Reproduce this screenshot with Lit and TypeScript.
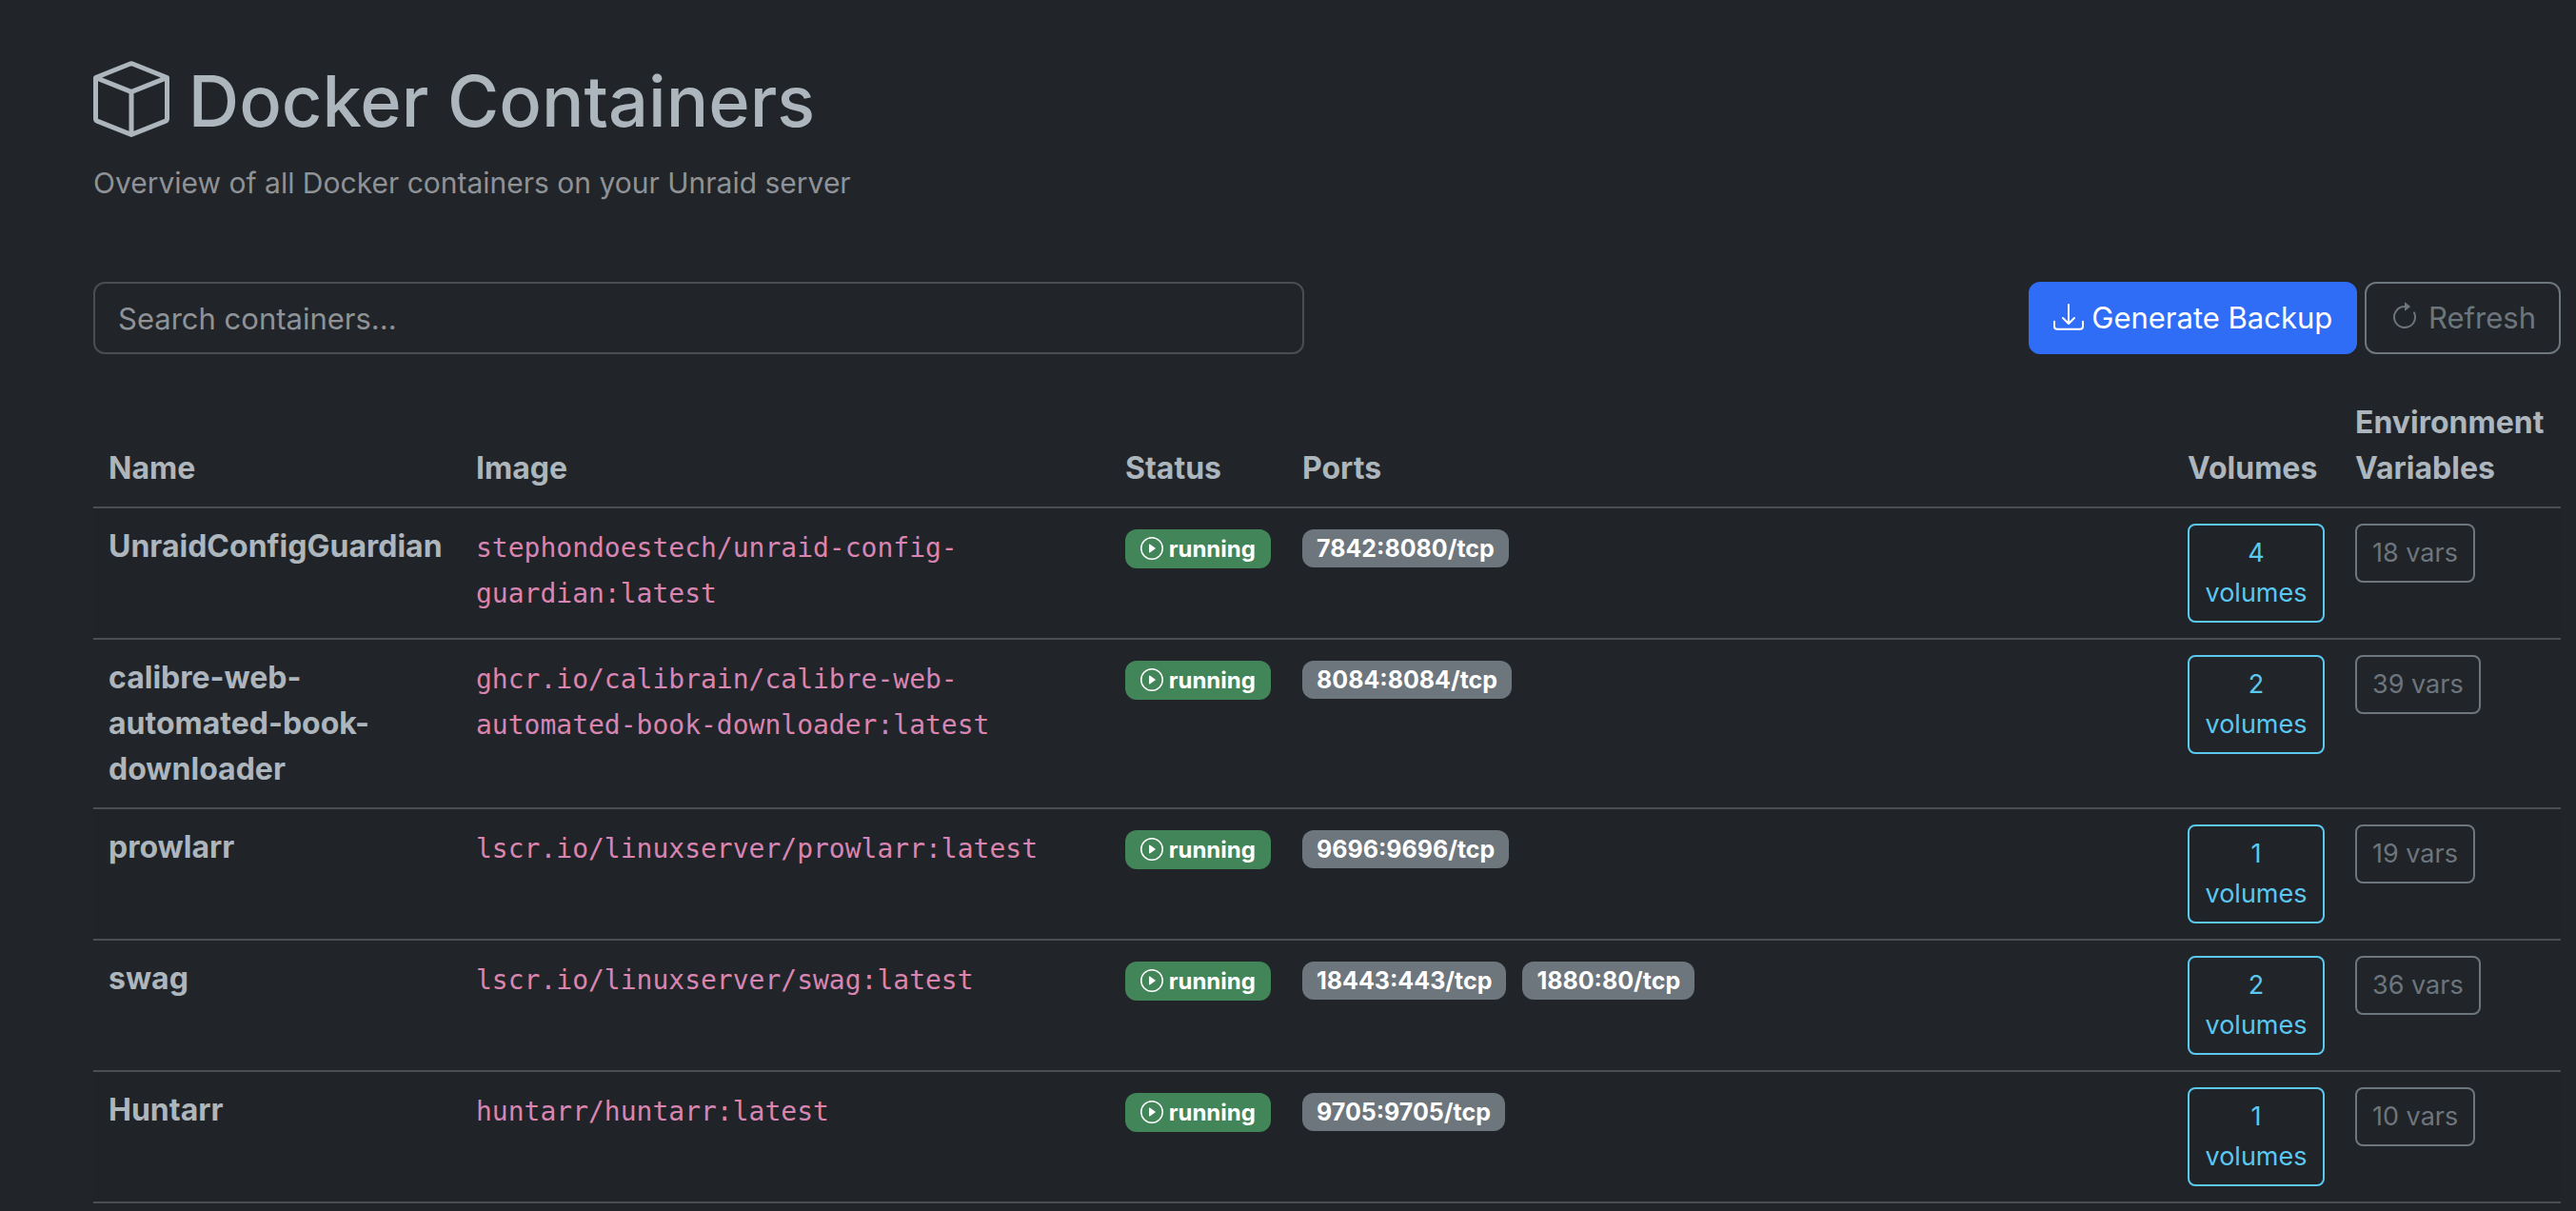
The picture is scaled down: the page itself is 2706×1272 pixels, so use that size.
import { LitElement, html, css, svg } from "lit";
import { customElement, state } from "lit/decorators.js";

interface Container {
  name: string;
  image: string;
  status: string;
  ports: string[];
  volumes: number;
  vars: number;
}

const CONTAINERS: Container[] = [
  { name: "UnraidConfigGuardian", image: "stephondoestech/unraid-config-guardian:latest", status: "running", ports: ["7842:8080/tcp"], volumes: 4, vars: 18 },
  { name: "calibre-web-automated-book-downloader", image: "ghcr.io/calibrain/calibre-web-automated-book-downloader:latest", status: "running", ports: ["8084:8084/tcp"], volumes: 2, vars: 39 },
  { name: "prowlarr", image: "lscr.io/linuxserver/prowlarr:latest", status: "running", ports: ["9696:9696/tcp"], volumes: 1, vars: 19 },
  { name: "swag", image: "lscr.io/linuxserver/swag:latest", status: "running", ports: ["18443:443/tcp", "1880:80/tcp"], volumes: 2, vars: 36 },
  { name: "Huntarr", image: "huntarr/huntarr:latest", status: "running", ports: ["9705:9705/tcp"], volumes: 1, vars: 10 },
];

const ICONS = {
  box: svg`<path d="M8.186 1.113a.5.5 0 0 0-.372 0L1.846 3.5 8 5.961 14.154 3.5zM15 4.239l-6.5 2.6v7.922l6.5-2.6V4.24zM7.5 14.762V6.838L1 4.239v7.923zM7.443.184a1.5 1.5 0 0 1 1.114 0l7.129 2.852A.5.5 0 0 1 16 3.5v8.662a1 1 0 0 1-.629.928l-7.185 2.874a.5.5 0 0 1-.372 0L.63 13.09a1 1 0 0 1-.63-.928V3.5a.5.5 0 0 1 .314-.464z"/>`,
  download: svg`<path d="M.5 9.9a.5.5 0 0 1 .5.5v2.5a1 1 0 0 0 1 1h12a1 1 0 0 0 1-1v-2.5a.5.5 0 0 1 1 0v2.5a2 2 0 0 1-2 2H2a2 2 0 0 1-2-2v-2.5a.5.5 0 0 1 .5-.5"/><path d="M7.646 11.854a.5.5 0 0 0 .708 0l3-3a.5.5 0 0 0-.708-.708L8.5 10.293V1.5a.5.5 0 0 0-1 0v8.793L5.354 8.146a.5.5 0 1 0-.708.708z"/>`,
  refresh: svg`<path fill-rule="evenodd" d="M8 3a5 5 0 1 0 4.546 2.914.5.5 0 0 1 .908-.417A6 6 0 1 1 8 2z"/><path d="M8 4.466V.534a.25.25 0 0 1 .41-.192l2.36 1.966c.12.1.12.284 0 .384L8.41 4.658A.25.25 0 0 1 8 4.466"/>`,
  play: svg`<path d="M8 15A7 7 0 1 1 8 1a7 7 0 0 1 0 14m0 1A8 8 0 1 0 8 0a8 8 0 0 0 0 16"/><path d="M6.271 5.055a.5.5 0 0 1 .52.038l3.5 2.5a.5.5 0 0 1 0 .814l-3.5 2.5A.5.5 0 0 1 6 10.5v-5a.5.5 0 0 1 .271-.445"/>`,
};

const icon = (name: keyof typeof ICONS) =>
  html`<svg class="icon" viewBox="0 0 16 16" fill="currentColor" aria-hidden="true">${ICONS[name]}</svg>`;

@customElement("app-root")
export class AppRoot extends LitElement {
  @state() private query = "";

  static styles = css`
    :host {
      display: block;
      box-sizing: border-box;
      min-height: 100vh;
      padding: 58px 16px 8px 98px;
      background: #212529;
      color: #adb5bd;
      font-family: Inter, "Liberation Sans", sans-serif;
      font-size: 31px;
      line-height: 48px;
    }
    *, *::before, *::after { box-sizing: border-box; }
    .icon {
      display: inline-block;
      width: 1em;
      height: 1em;
      vertical-align: -0.125em;
    }
    .title {
      margin: 0 0 14px;
      font-size: 74px;
      font-weight: 500;
      line-height: 96px;
    }
    .title .icon { width: 80px; height: 80px; vertical-align: -11px; }
    .subtitle { margin: 0; color: #8f9296; font-size: 30px; }
    .toolbar {
      display: grid;
      grid-template-columns: 1fr 1fr;
      gap: 48px;
      margin-top: 80px;
    }
    .actions {
      display: flex;
      justify-content: flex-end;
      gap: 8px;
    }
    .search, .btn {
      font: inherit;
      border: 2px solid #4a4e53;
      border-radius: 12px;
      padding: 12px 24px;
      background: transparent;
    }
    .search {
      width: 100%;
      height: 76px;
      color: #adb5bd;
    }
    .search::placeholder { color: #8f9296; opacity: 1; }
    .btn { white-space: nowrap; }
    .btn .icon { width: 32px; height: 32px; }
    .primary {
      border-color: #306df6;
      background: #306df6;
      color: #fff;
    }
    .muted { border-color: #6d757d; color: #6d757d; }
    .table {
      width: 100%;
      margin-top: 32px;
      table-layout: fixed;
      border-collapse: separate;
      border-spacing: 0;
      font-size: 32px;
    }
    .col-name { width: 386px; }
    .col-image { width: 682px; }
    .col-status { width: 186px; }
    .col-volumes { width: 176px; }
    .col-env { width: 232px; }
    th, td {
      padding: 16px;
      border-bottom: 2px solid #4b4f54;
      text-align: left;
      vertical-align: top;
    }
    th { vertical-align: bottom; font-weight: 700; }
    tbody tr:nth-child(odd) { background: #202327; }
    .name { font-weight: 700; }
    .image {
      font-family: "DejaVu Sans Mono", monospace;
      font-size: 28px;
      line-height: 24px;
      color: #d985b2;
    }
    .badge {
      display: inline-block;
      padding: 8px 16px;
      border-radius: 12px;
      background: #6d757d;
      color: #fff;
      font-size: 24px;
      font-weight: 700;
      line-height: 24px;
      white-space: nowrap;
    }
    .port {
      margin-right: 8px;
      padding: 8px 15px;
      font-size: 25px;
    }
    .running { background: #428558; }
    .small {
      display: block;
      padding: 8px 16px;
      border: 2px solid #6d757d;
      border-radius: 8px;
      background: transparent;
      color: #6d757d;
      font: inherit;
      font-size: 27px;
      line-height: 42px;
    }
    .volumes {
      width: 100%;
      border-color: #5bc8ef;
      color: #5bc8ef;
    }
  `;

  private get rows() {
    const q = this.query.toLowerCase();
    return CONTAINERS.filter((c) => (c.name + " " + c.image).toLowerCase().includes(q));
  }

  render() {
    return html`
      <header>
        <h1 class="title">${icon("box")} Docker Containers</h1>
        <p class="subtitle">Overview of all Docker containers on your Unraid server</p>
      </header>
      <div class="toolbar">
        <input
          class="search"
          type="text"
          aria-label="Search containers"
          placeholder="Search containers..."
          .value=${this.query}
          @input=${(e: Event) => (this.query = (e.target as HTMLInputElement).value)}
        />
        <div class="actions">
          <button class="btn primary" type="button">${icon("download")} Generate Backup</button>
          <button class="btn muted" type="button">${icon("refresh")} Refresh</button>
        </div>
      </div>
      <table class="table">
        <colgroup>
          <col class="col-name" />
          <col class="col-image" />
          <col class="col-status" />
          <col />
          <col class="col-volumes" />
          <col class="col-env" />
        </colgroup>
        <thead>
          <tr>
            <th scope="col">Name</th>
            <th scope="col">Image</th>
            <th scope="col">Status</th>
            <th scope="col">Ports</th>
            <th scope="col">Volumes</th>
            <th scope="col">Environment Variables</th>
          </tr>
        </thead>
        <tbody>
          ${this.rows.map(
            (c) => html`<tr>
              <td><strong class="name">${c.name}</strong></td>
              <td><code class="image">${c.image}</code></td>
              <td><span class="badge running">${icon("play")} ${c.status}</span></td>
              <td>${c.ports.map((p) => html`<span class="badge port">${p}</span> `)}</td>
              <td><button class="small volumes" type="button">${c.volumes} volumes</button></td>
              <td><button class="small" type="button">${c.vars} vars</button></td>
            </tr>`,
          )}
        </tbody>
      </table>
    `;
  }
}
